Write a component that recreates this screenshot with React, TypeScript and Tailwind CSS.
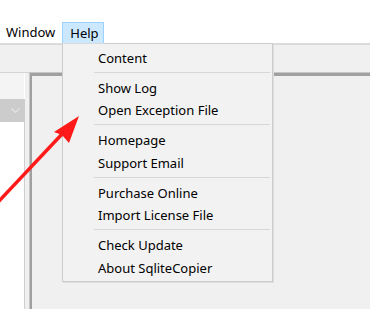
import { ReactNode } from "react"

const MenuItem = ({ children }: { children: ReactNode }) => (
  <div className="h-[22.5px] flex items-center pl-[35px] pt-[2px] whitespace-nowrap">{children}</div>
)

const Separator = () => (
  <div className="h-[7.5px] flex items-center pl-[31px] pr-[2px]">
    <div className="h-px w-full bg-[#d7d7d7]" />
  </div>
)

const App = () => {
  return (
    <div className="relative w-[370px] h-[309px] overflow-hidden bg-[#f0f0f0] text-black text-[13px] font-['Noto_Sans',sans-serif]">
      {/* menu bar */}
      <div className="h-[43px] bg-white flex items-end">
        <div className="h-[21px] pl-[6px] pr-[7px] pt-[1px] flex items-center">Window</div>
        <div className="h-[21px] w-[42px] pl-[7px] pt-[1px] flex items-center bg-[#cce8ff] border border-b-0 border-[#99d1ff]">
          Help
        </div>
      </div>
      <div className="h-[2px] bg-[#dadada]" />
      {/* toolbar strip */}
      <div className="h-[27px]" />

      {/* panels */}
      <div className="flex h-[237px]">
        <div className="w-[29px] border-t border-[#d4d4d4] flex">
          <div className="w-[25px] flex flex-col">
            <div className="h-[26px] bg-[#f4f4f4] border-r border-white" />
            <div className="h-[23px] bg-[#cccccc] flex items-center justify-end pr-[5px]">
              <svg width="9" height="6" viewBox="0 0 9 6">
                <path d="M0.5 0.5 L4.5 4.5 L8.5 0.5" fill="none" stroke="#e4e4e4" strokeWidth="1.2" />
              </svg>
            </div>
            <div className="flex-1 bg-white border-r border-[#cfcfcf]" />
          </div>
        </div>
        <div className="flex-1 border-t border-l border-[#c6c6c6]">
          <div className="h-full border-t-[3px] border-l-[2px] border-[#a0a0a0] bg-[#f0f0f0]" />
        </div>
      </div>

      {/* dropdown menu */}
      <div className="absolute left-[62px] top-[44px] w-[211px] h-[238px] bg-[#f2f2f2] border border-t-0 border-[#cccccc] shadow-[1px_1px_0_#dedede] pt-[2px]">
        <MenuItem>Content</MenuItem>
        <Separator />
        <MenuItem>Show Log</MenuItem>
        <MenuItem>Open Exception File</MenuItem>
        <Separator />
        <MenuItem>Homepage</MenuItem>
        <MenuItem>Support Email</MenuItem>
        <Separator />
        <MenuItem>Purchase Online</MenuItem>
        <MenuItem>Import License File</MenuItem>
        <Separator />
        <MenuItem>Check Update</MenuItem>
        <MenuItem>About SqliteCopier</MenuItem>
      </div>
      <div className="absolute left-[104px] top-[43px] w-[169px] h-px bg-[#cccccc]" />

      {/* red annotation arrow */}
      <svg className="absolute inset-0 pointer-events-none" width="370" height="309" viewBox="0 0 370 309">
        <line x1="-8" y1="208.5" x2="63" y2="133" stroke="#ff1a1a" strokeWidth="3.5" />
        <polygon points="79,116 69,143 62,135 54,132" fill="#ff1a1a" />
      </svg>
    </div>
  )
}

export default App
